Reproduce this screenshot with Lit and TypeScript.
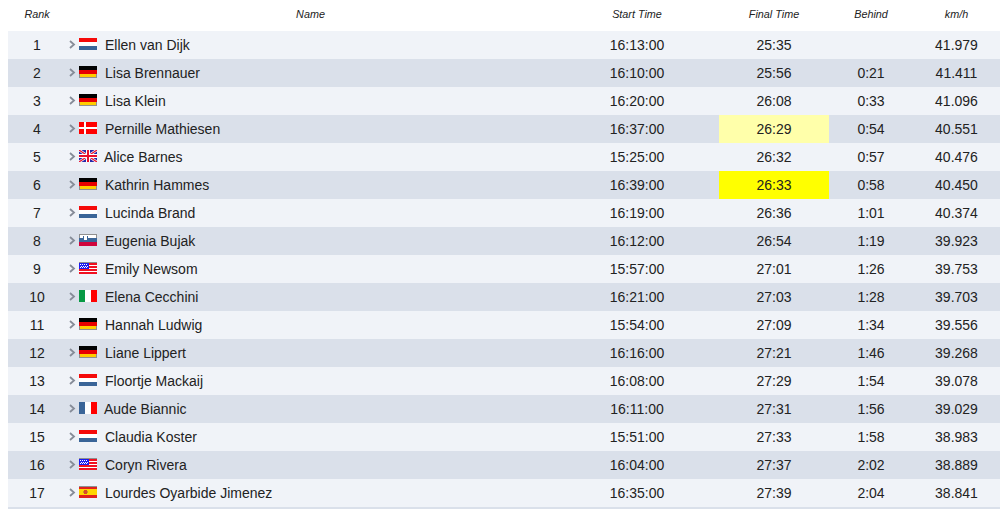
import { LitElement, html, css, svg } from "lit";
import { customElement } from "lit/decorators.js";

const BLUE = "#3a6598";
const GREY = "#8f8f8f";
const flags: Record<string, unknown> = {
  nl: svg`<rect width="18" height="4" fill="#f50a0a"/><rect y="4" width="18" height="4" fill="#fff"/><rect y="8" width="18" height="4" fill="${BLUE}"/>`,
  de: svg`<rect width="18" height="12" fill="${GREY}"/><rect width="18" height="4" fill="#000"/><rect y="4" width="18" height="4" fill="#e80000"/><rect x="1" y="8" width="16" height="3" fill="#ffcc00"/>`,
  dk: svg`<rect width="18" height="12" fill="#f00"/><rect x="5" width="2" height="12" fill="#fff"/><rect y="5" width="18" height="2" fill="#fff"/>`,
  gb: svg`<rect width="18" height="12" fill="#2626a8"/><path d="M0 0L18 12M18 0L0 12" stroke="#fff" stroke-width="2.6"/><path d="M0 0L18 12M18 0L0 12" stroke="#e8102c" stroke-width="1.2"/><rect x="7" width="4" height="12" fill="#fff"/><rect y="4" width="18" height="4" fill="#fff"/><rect x="8" width="2" height="12" fill="#e8102c"/><rect y="5" width="18" height="2" fill="#e8102c"/>`,
  si: svg`<rect width="18" height="12" fill="${GREY}"/><rect x="1" y="1" width="16" height="3" fill="#fff"/><rect y="4" width="18" height="4" fill="${BLUE}"/><rect y="8" width="18" height="4" fill="#d0043c"/><rect x="5" y="2" width="3" height="4" fill="#fff"/><rect x="4" y="2" width="1" height="3" fill="${BLUE}"/><rect x="8" y="2" width="1" height="3" fill="${BLUE}"/>`,
  us: svg`<rect width="18" height="12" fill="#f01020"/><rect width="18" height="1" fill="${GREY}"/><rect y="3" width="18" height="1" fill="#fff"/><rect y="6" width="18" height="1" fill="#fff"/><rect y="9" width="18" height="1" fill="#fff"/><rect y="1" width="10" height="6" fill="#1c1cf0"/><path d="M1 2h1v1h-1zM3 2h1v1h-1zM5 2h1v1h-1zM7 2h1v1h-1zM2 4h1v1h-1zM4 4h1v1h-1zM6 4h1v1h-1zM8 4h1v1h-1zM1 5h1v1h-1zM3 5h1v1h-1zM5 5h1v1h-1zM7 5h1v1h-1z" fill="#fff"/>`,
  it: svg`<rect width="6" height="12" fill="#079a45"/><rect x="6" width="6" height="12" fill="#fff"/><rect x="12" width="6" height="12" fill="#f00"/>`,
  fr: svg`<rect width="6" height="12" fill="${BLUE}"/><rect x="6" width="6" height="12" fill="#fff"/><rect x="12" width="6" height="12" fill="#f00"/>`,
  es: svg`<rect width="18" height="12" fill="#e0201c"/><rect width="18" height="1" fill="${GREY}"/><rect y="3" width="18" height="6" fill="#ffd400"/><rect x="5" y="4" width="3" height="4" fill="#d8482a"/><rect x="4" y="5" width="1" height="2" fill="#c8902a"/><rect x="8" y="5" width="1" height="2" fill="#c8902a"/>`,
};

interface Row { n: string; f: string; st: string; ft: string; b: string; k: string; hl?: string }
const rows: Row[] = [
  { n: "Ellen van Dijk", f: "nl", st: "16:13:00", ft: "25:35", b: "", k: "41.979" },
  { n: "Lisa Brennauer", f: "de", st: "16:10:00", ft: "25:56", b: "0:21", k: "41.411" },
  { n: "Lisa Klein", f: "de", st: "16:20:00", ft: "26:08", b: "0:33", k: "41.096" },
  { n: "Pernille Mathiesen", f: "dk", st: "16:37:00", ft: "26:29", b: "0:54", k: "40.551", hl: "soft" },
  { n: "Alice Barnes", f: "gb", st: "15:25:00", ft: "26:32", b: "0:57", k: "40.476" },
  { n: "Kathrin Hammes", f: "de", st: "16:39:00", ft: "26:33", b: "0:58", k: "40.450", hl: "full" },
  { n: "Lucinda Brand", f: "nl", st: "16:19:00", ft: "26:36", b: "1:01", k: "40.374" },
  { n: "Eugenia Bujak", f: "si", st: "16:12:00", ft: "26:54", b: "1:19", k: "39.923" },
  { n: "Emily Newsom", f: "us", st: "15:57:00", ft: "27:01", b: "1:26", k: "39.753" },
  { n: "Elena Cecchini", f: "it", st: "16:21:00", ft: "27:03", b: "1:28", k: "39.703" },
  { n: "Hannah Ludwig", f: "de", st: "15:54:00", ft: "27:09", b: "1:34", k: "39.556" },
  { n: "Liane Lippert", f: "de", st: "16:16:00", ft: "27:21", b: "1:46", k: "39.268" },
  { n: "Floortje Mackaij", f: "nl", st: "16:08:00", ft: "27:29", b: "1:54", k: "39.078" },
  { n: "Aude Biannic", f: "fr", st: "16:11:00", ft: "27:31", b: "1:56", k: "39.029" },
  { n: "Claudia Koster", f: "nl", st: "15:51:00", ft: "27:33", b: "1:58", k: "38.983" },
  { n: "Coryn Rivera", f: "us", st: "16:04:00", ft: "27:37", b: "2:02", k: "38.889" },
  { n: "Lourdes Oyarbide Jimenez", f: "es", st: "16:35:00", ft: "27:39", b: "2:04", k: "38.841" },
];

@customElement("app-root")
export class AppRoot extends LitElement {
  static styles = css`
    :host { display: block; height: 509px; overflow: hidden; background: #fff; padding: 0 1px 0 8px; box-sizing: border-box; font-family: "Liberation Sans", Arial, sans-serif; color: #222; }
    .table { display: grid; grid-template-columns: 58px 489px 164px 110px 84px 87px; }
    .row { display: contents; }
    .cell { height: 28px; display: flex; align-items: center; justify-content: center; font-size: 14px; white-space: nowrap; }
    .head { height: 31px; font-size: 10.8px; font-style: italic; padding-bottom: 3px; box-sizing: border-box; }
    .odd .cell { background: #f0f3f8; }
    .even .cell { background: #dae0ea; }
    .row .cell.soft { background: #ffffaa; }
    .row .cell.full { background: #ffff00; }
    .name { justify-content: flex-start; padding-left: 3px; box-sizing: border-box; }
    .chev { width: 7px; height: 9px; margin: 0 3px 1px 0; flex: none; }
    .flag { width: 18px; height: 12px; margin: 0 8px 2px 0; flex: none; display: block; shape-rendering: crispEdges; }
    .flag.tight { margin-right: 7px; }
    .flag.gb { shape-rendering: auto; }
  `;

  render() {
    return html`<div class="table">
      <div class="cell head">Rank</div>
      <div class="cell head">Name</div>
      <div class="cell head">Start Time</div>
      <div class="cell head">Final Time</div>
      <div class="cell head">Behind</div>
      <div class="cell head">km/h</div>
      ${rows.map((r, i) => html`<div class="row ${i % 2 ? "even" : "odd"}">
        <div class="cell">${i + 1}</div>
        <div class="cell name">
          <svg class="chev" viewBox="0 0 7 9"><path d="M1 1l4 3.5-4 3.5" fill="none" stroke="#868c98" stroke-width="1.8"/></svg>
          <svg class="flag ${r.f} ${r.f === "gb" || r.f === "fr" ? "tight" : ""}" viewBox="0 0 18 12">${flags[r.f]}</svg>
          ${r.n}
        </div>
        <div class="cell">${r.st}</div>
        <div class="cell ${r.hl ?? ""}">${r.ft}</div>
        <div class="cell">${r.b}</div>
        <div class="cell">${r.k}</div>
      </div>`)}
      <div class="row even">
        ${[0, 1, 2, 3, 4, 5].map(() => html`<div class="cell"></div>`)}
      </div>
    </div>`;
  }
}
